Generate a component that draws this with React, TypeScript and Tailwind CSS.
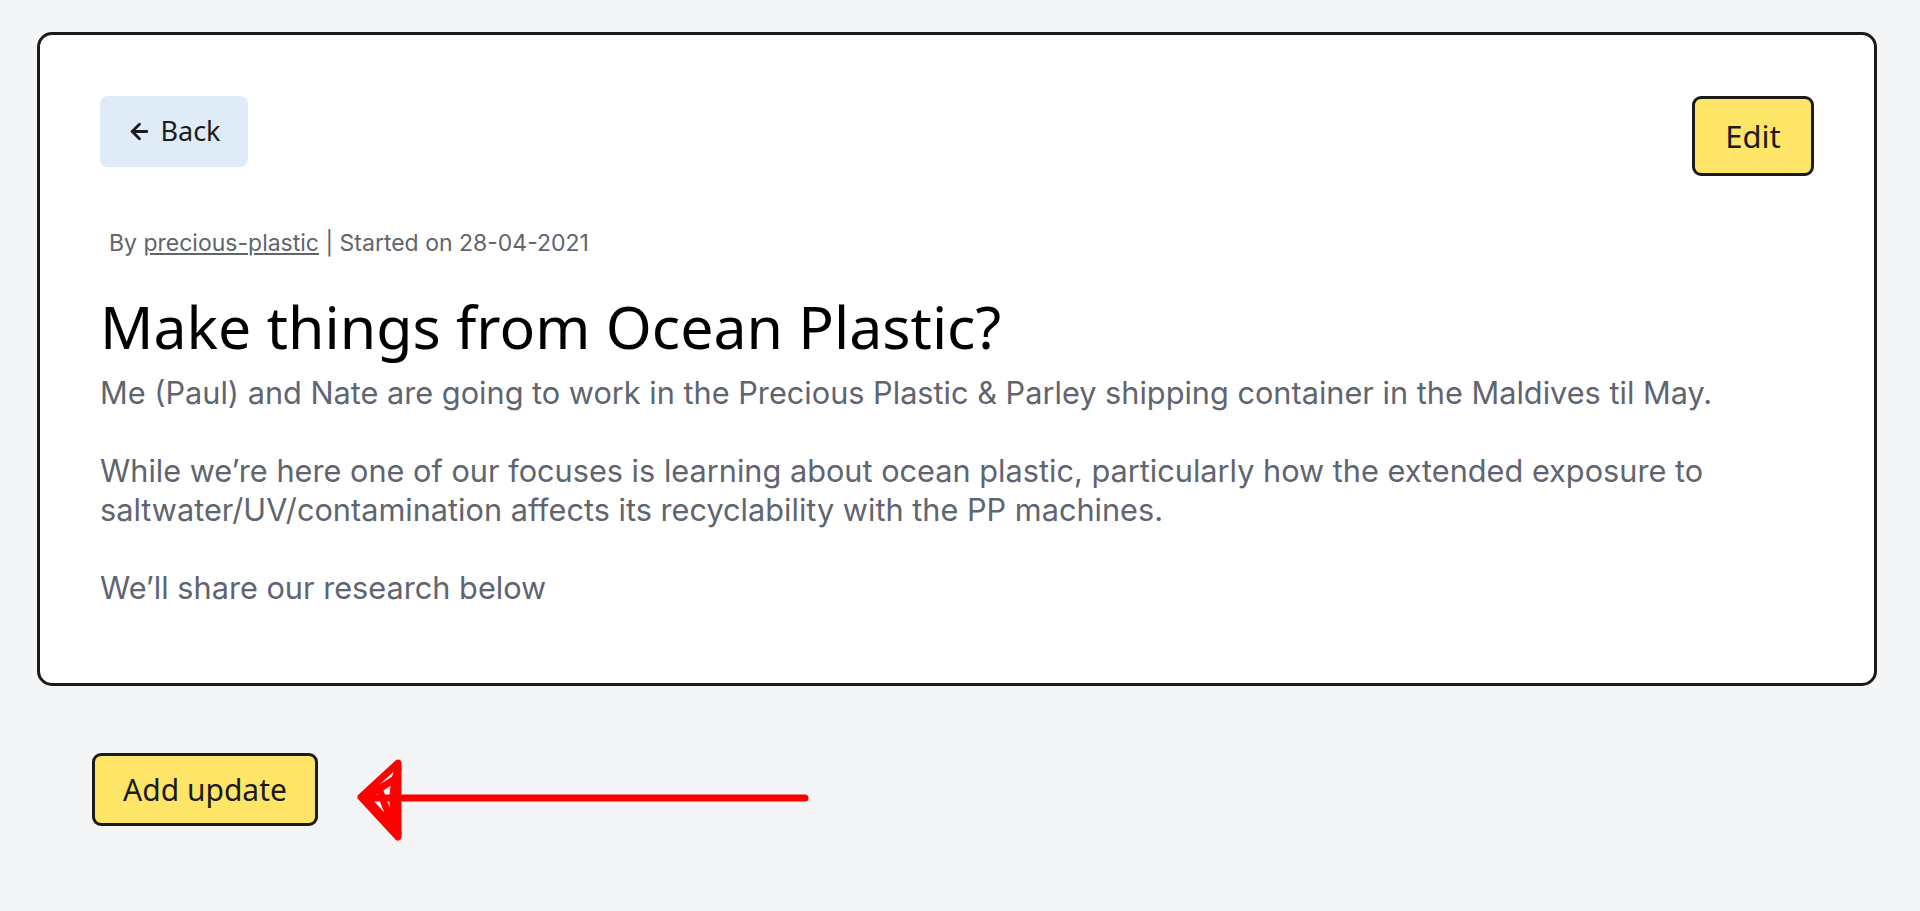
import { ArrowLeft } from "lucide-react";

const display = "font-['Noto_Sans',sans-serif]";
const body = "font-['Inter',sans-serif]";

function Arrow() {
    return (
        <svg width="460" height="90" viewBox="355 755 460 90" className="ml-[37px] mt-[1px]" fill="none">
            <g stroke="#ff0000" strokeWidth="7" strokeLinecap="round" strokeLinejoin="round">
                <path d="M398 764 L361 798 L398 838 Z" />
                <path d="M398 770 Q388 800 398 834" />
                <path d="M366 798 L395 780 M370 803 L393 828 M380 792 Q386 810 392 822" />
                <path d="M364 799 L805 799" />
            </g>
        </svg>
    );
}

export default function App() {
    return (
        <div className="min-h-screen bg-[#f4f5f7] pt-[32px] pl-[37px] pr-[43px]">
            <div className="rounded-[15px] border-[3px] border-[#1b1b1b] bg-white px-[60px] pt-[61px] pb-[76px]">
                <div className="flex items-start justify-between">
                    <button className={`${display} flex h-[71px] w-[148px] items-center justify-center gap-2 rounded-[8px] bg-[#dfebf7] text-[27px] text-[#1b1b1b]`}>
                        <ArrowLeft size={25} strokeWidth={2.75} />
                        Back
                    </button>
                    <button className={`${display} h-[80px] w-[122px] rounded-[9px] border-[3px] border-[#1b1b1b] bg-[#fee567] text-[31px] text-[#1b1b1b]`}>
                        Edit
                    </button>
                </div>

                <div className={`${body} mt-[52px] pl-[9px] text-[23px] leading-[30px] text-[#61646b]`}>
                    By <span className="underline underline-offset-2">precious-plastic</span> | Started on 28-04-2021
                </div>

                <h1 className={`${display} mt-[36px] mb-[15px] text-[59px] leading-[64px] text-black`}>
                    Make things from Ocean Plastic?
                </h1>

                <div className={`${body} whitespace-pre-line text-[30.7px] leading-[39px] text-[#5f6570]`}>
                    {"Me (Paul) and Nate are going to work in the Precious Plastic & Parley shipping container in the Maldives til May.\n\nWhile we\u2019re here one of our focuses is learning about ocean plastic, particularly how the extended exposure to saltwater/UV/contamination affects its recyclability with the PP machines.\n\nWe\u2019ll share our research below"}
                </div>
            </div>

            <div className="mt-[67px] flex items-start pl-[55px]">
                <button className={`${display} h-[73px] w-[226px] rounded-[9px] border-[3px] border-[#1b1b1b] bg-[#fee567] text-[30px] text-[#1b1b1b]`}>
                    Add update
                </button>
                <Arrow />
            </div>
        </div>
    );
}
